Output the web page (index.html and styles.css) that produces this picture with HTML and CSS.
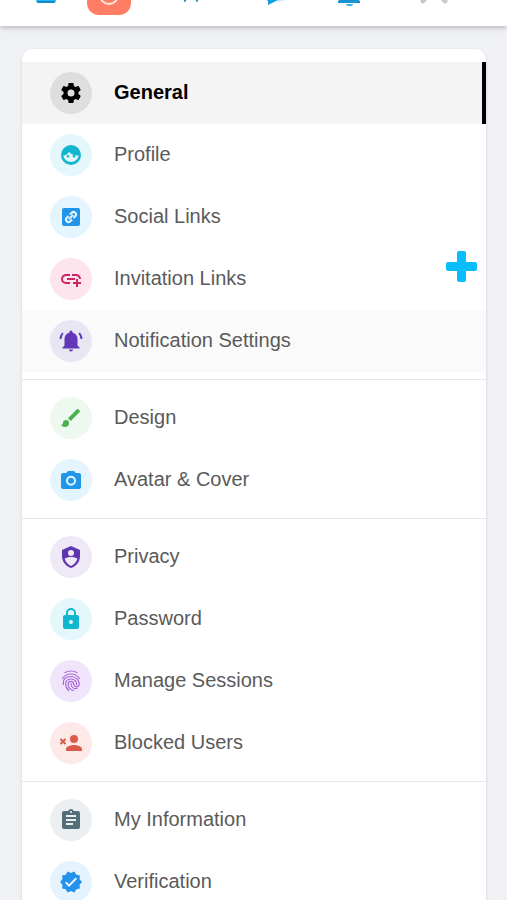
FILE: index.html
```html
<!DOCTYPE html>
<html lang="en">
<head>
<meta charset="utf-8">
<meta name="viewport" content="width=device-width, initial-scale=1">
<title>General Settings</title>
<link rel="stylesheet" href="styles.css">
</head>
<body>
<header class="topbar">
  <a href="#" aria-label="Home"><svg width="22" height="22" viewBox="0 0 22 22"><rect x="1" width="20" height="19" rx="3" fill="#2ab4f2"/><path d="M3 18h16" stroke="#128acb" stroke-width="2" stroke-linecap="round"/></svg></a>
  <a href="#" class="tile" aria-label="Stories"><svg width="24" height="24" viewBox="0 0 24 24"><circle cx="12" cy="14" r="9" fill="none" stroke="#ffe9e2" stroke-width="2"/></svg></a>
  <a href="#" aria-label="Groups"><svg width="18" height="22" viewBox="0 0 18 22"><path d="M5 1L3 17M12 1l3 16" stroke="#2f94b5" stroke-width="2" stroke-linecap="round"/></svg></a>
  <a href="#" aria-label="Messages"><svg width="24" height="24" viewBox="0 0 24 24"><path d="M2 2h18v15l-7 2-8 4v-4l-3-2z" fill="#159fe0"/><path d="M15 12h8v6l-9 2z" fill="#d3e2fa"/></svg></a>
  <a href="#" aria-label="Notifications"><svg width="22" height="24" viewBox="0 0 22 24"><path d="M4 16V9a7 7 0 0 1 14 0v7l4 3v2H0v-2z" fill="#1694cf"/><path d="M8 22h7a3.500 2 0 0 1-7 0z" fill="#38b4ec"/></svg></a>
  <a href="#" aria-label="Account"><svg width="30" height="22" viewBox="0 0 30 22"><path d="M9 11L4 17M21 11l5 6" stroke="#cbc9d4" stroke-width="5" stroke-linecap="round"/></svg></a>
</header>
<main class="page">
  <nav class="card" aria-label="Settings">
    <ul class="group">
      <li><a href="#" class="item active" aria-current="page"><span class="badge gray"><svg viewBox="0 0 24 24"><path d="M12,15.500A3.500,3.500 0 0,1 8.500,12A3.500,3.500 0 0,1 12,8.500A3.500,3.500 0 0,1 15.500,12A3.500,3.500 0 0,1 12,15.500M19.430,12.970C19.470,12.650 19.500,12.330 19.500,12C19.500,11.670 19.470,11.340 19.430,11L21.540,9.370C21.730,9.220 21.780,8.950 21.660,8.730L19.660,5.270C19.540,5.050 19.270,4.960 19.050,5.050L16.560,6.050C16.040,5.660 15.500,5.320 14.870,5.070L14.500,2.420C14.460,2.180 14.250,2 14,2H10C9.750,2 9.540,2.180 9.500,2.420L9.130,5.070C8.500,5.320 7.960,5.660 7.440,6.050L4.950,5.050C4.730,4.960 4.460,5.050 4.340,5.270L2.340,8.730C2.210,8.950 2.270,9.220 2.460,9.370L4.570,11C4.530,11.340 4.500,11.670 4.500,12C4.500,12.330 4.530,12.650 4.570,12.970L2.460,14.630C2.270,14.780 2.210,15.050 2.340,15.270L4.340,18.730C4.460,18.950 4.730,19.030 4.950,18.950L7.440,17.940C7.960,18.340 8.500,18.680 9.130,18.930L9.500,21.580C9.540,21.820 9.750,22 10,22H14C14.250,22 14.460,21.820 14.500,21.580L14.870,18.930C15.500,18.670 16.040,18.340 16.560,17.940L19.050,18.950C19.270,19.030 19.540,18.950 19.660,18.730L21.660,15.270C21.780,15.050 21.730,14.780 21.540,14.630L19.430,12.970Z"/></svg></span><span class="label">General</span></a></li>
      <li><a href="#" class="item"><span class="badge cyan"><svg viewBox="0 0 24 24"><circle cx="12" cy="12" r="10"/><path class="cut" d="M4.200 12.500C7 12.500 9 11 10 8.800c1.800 2.500 4.600 3.700 8 3.700q1 0 1.800-.3A7.900 7.900 0 0 1 4.200 12.500z"/><circle cx="9" cy="13.200" r="1.300"/><circle cx="15" cy="13.200" r="1.300"/></svg></span><span class="label">Profile</span></a></li>
      <li><a href="#" class="item"><span class="badge sky"><svg viewBox="0 0 24 24"><rect x="3" y="3" width="18" height="18" rx="2"/><g class="line cutline" transform="rotate(-45 12 12)"><path d="M11 9.500H8.500a2.500 2.500 0 0 0 0 5H11M13 9.500h2.500a2.500 2.500 0 0 1 0 5H13M9 12h6"/></g></svg></span><span class="label">Social Links</span></a></li>
      <li><a href="#" class="item"><span class="badge pink"><svg viewBox="0 0 24 24"><path d="M8,11H16V13H8V11M20.100,12H22C22,9.240 19.760,7 17,7H13V8.900H17C18.710,8.900 20.100,10.290 20.100,12M3.900,12C3.900,10.290 5.290,8.900 7,8.900H11V7H7A5,5 0 0,0 2,12A5,5 0 0,0 7,17H11V15.100H7C5.290,15.100 3.900,13.710 3.900,12M19,12H17V15H14V17H17V20H19V17H22V15H19V12Z"/></svg></span><span class="label">Invitation Links</span></a></li>
      <li><a href="#" class="item hovered"><span class="badge indigo"><svg viewBox="0 0 24 24"><path d="M12 1.500a1.600 1.600 0 0 0-1.600 1.600v.6A6.500 6.500 0 0 0 5.500 10v6.500L3.500 18.500v1h17v-1l-2-2V10a6.500 6.500 0 0 0-4.900-6.300v-.6A1.600 1.600 0 0 0 12 1.500zM10 20.500a2 2 0 0 0 4 0z"/><path class="line" d="M3.800 4Q1.800 6.500 1.500 10M20.200 4q2 2.500 2.300 6"/></svg></span><span class="label">Notification Settings</span></a></li>
    </ul>
    <ul class="group">
      <li><a href="#" class="item"><span class="badge green"><svg viewBox="0 0 24 24"><path d="M20.710,4.630L19.370,3.290C19,2.900 18.350,2.900 17.960,3.290L9,12.250L11.750,15L20.710,6.040C21.100,5.650 21.100,5 20.710,4.630M7,14A3,3 0 0,0 4,17C4,18.310 2.840,19 2,19C2.920,20.220 4.500,21 6,21A4,4 0 0,0 10,17A3,3 0 0,0 7,14Z"/></svg></span><span class="label">Design</span></a></li>
      <li><a href="#" class="item"><span class="badge sky"><svg viewBox="0 0 24 24"><path d="M9 3L7.200 5H4a2 2 0 0 0-2 2v12a2 2 0 0 0 2 2h16a2 2 0 0 0 2-2V7a2 2 0 0 0-2-2h-3.200L15 3z"/><circle class="line cutline" cx="12" cy="12.800" r="4"/></svg></span><span class="label">Avatar &amp; Cover</span></a></li>
    </ul>
    <ul class="group">
      <li><a href="#" class="item"><span class="badge violet"><svg viewBox="0 0 24 24"><path d="M12 1L3 5v6c0 5.550 3.840 10.740 9 12 5.160-1.260 9-6.450 9-12V5z"/><circle class="cut" cx="12" cy="8" r="3"/><path class="cut" d="M5.600 13.600C7 12.500 10 12 12 12s5 .5 6.400 1.600C17.500 17 15 20 12 21c-3-1-5.500-4-6.400-7.400z"/></svg></span><span class="label">Privacy</span></a></li>
      <li><a href="#" class="item"><span class="badge cyan"><svg viewBox="0 0 24 24"><path d="M12,17A2,2 0 0,0 14,15C14,13.890 13.100,13 12,13A2,2 0 0,0 10,15A2,2 0 0,0 12,17M18,8A2,2 0 0,1 20,10V20A2,2 0 0,1 18,22H6A2,2 0 0,1 4,20V10C4,8.890 4.900,8 6,8H7V6A5,5 0 0,1 12,1A5,5 0 0,1 17,6V8H18M12,3A3,3 0 0,0 9,6V8H15V6A3,3 0 0,0 12,3Z"/></svg></span><span class="label">Password</span></a></li>
      <li><a href="#" class="item"><span class="badge purple"><svg viewBox="0 0 24 24"><path class="thin" d="M6 3.500q6-3 12 0M3.500 9.500q3-4.500 8.500-4.500t8.500 4.500M4.500 15.500C3.500 10 7 7.500 12 7.500s9 4 8 8.500c-.7 2.600-4.800 2.300-5.200-.3-.4-4.400-5.300-4.200-5.600-.5-.2 3 2 5.300 5.300 6.300M9.500 21.500C5 17 5.800 10 12 10c4 0 5.800 3 5.600 5.800M12 14.500c0 3.800 2.400 5.500 6 5"/></svg></span><span class="label">Manage Sessions</span></a></li>
      <li><a href="#" class="item"><span class="badge red"><svg viewBox="0 0 24 24"><circle cx="15" cy="8" r="4"/><path d="M7 20v-2c0-2.700 5.300-4 8-4s8 1.300 8 4v2z"/><path class="line" d="M1.500 8l5 5M6.500 8l-5 5"/></svg></span><span class="label">Blocked Users</span></a></li>
    </ul>
    <ul class="group">
      <li><a href="#" class="item"><span class="badge slate"><svg viewBox="0 0 24 24"><path d="M19 3h-4.200a3 3 0 0 0-5.600 0H5a2 2 0 0 0-2 2v14a2 2 0 0 0 2 2h14a2 2 0 0 0 2-2V5a2 2 0 0 0-2-2z"/><circle class="cut" cx="12" cy="4" r="1"/><path class="cut" d="M7 7h10v2H7zM7 11h10v2H7zM7 15h7v2H7z"/></svg></span><span class="label">My Information</span></a></li>
      <li><a href="#" class="item"><span class="badge blue"><svg viewBox="0 0 24 24"><path d="M23,12L20.560,9.220L20.900,5.540L17.290,4.720L15.400,1.540L12,3L8.600,1.540L6.710,4.720L3.100,5.530L3.440,9.210L1,12L3.440,14.780L3.100,18.470L6.710,19.290L8.600,22.470L12,21L15.400,22.460L17.290,19.280L20.900,18.460L20.560,14.780L23,12M10,17L6,13L7.410,11.590L10,14.170L16.590,7.580L18,9L10,17Z"/></svg></span><span class="label">Verification</span></a></li>
    </ul>
    <button class="add" type="button" aria-label="Add"><svg width="32" height="32" viewBox="0 0 32 32" fill="#08bdfb"><rect x="1" y="11" width="31" height="9" rx="2"/><rect x="12" width="9" height="31" rx="2"/></svg></button>
  </nav>
</main>
</body>
</html>
```
FILE: styles.css
```css
* { box-sizing: border-box; }

body {
  height: 100vh;
  margin: 0;
  overflow: hidden;
  background: #eff1f5;
  font-family: "Liberation Sans", Arial, sans-serif;
  font-size: 20px;
  line-height: 24px;
  color: #5a5a5a;
}

/* Bar tucked under the top edge of the window */
.topbar {
  display: grid;
  grid-template-rows: 100%;
  grid-template-columns: 64fr 62fr 102fr 66fr 82fr 88fr;
  justify-items: center;
  align-items: end;
  height: 26px;
  padding: 0 29px 20px 14px;
  background: #fff;
  box-shadow: 0 1px 6px rgba(0, 0, 0, .3);
}

.topbar a { display: grid; place-items: center; }

.topbar svg { display: block; }

.topbar .tile {
  width: 44px;
  height: 44px;
  margin-bottom: -9px;
  border-radius: 12px;
  background: #ff7d63;
}

.page { padding: 23px 21px 20px 22px; }

.card {
  position: relative;
  padding: 13px 0;
  border-radius: 10px;
  background: #fff;
  box-shadow: 0 1px 3px rgba(0, 0, 0, .14);
}

.group { margin: 0; padding: 0; list-style: none; }

.group + .group {
  margin-top: 7px;
  padding-top: 7px;
  border-top: 1px solid #e6e8ec;
}

.item {
  display: flex;
  align-items: center;
  gap: 22px;
  height: 62px;
  padding: 0 28px;
  color: inherit;
  text-decoration: none;
}

.item.active {
  border-right: 4px solid #000;
  background: #f4f4f4;
  color: #000;
  font-weight: 700;
}

.item.hovered { background: #fafafa; }

.label { padding-bottom: 3px; }

.badge {
  display: grid;
  flex: none;
  place-items: center;
  width: 42px;
  height: 42px;
  border-radius: 50%;
  background: var(--tint);
}

.badge svg { width: 24px; height: 24px; fill: var(--ink); }
.badge .cut { fill: var(--tint); }
.badge .line { fill: none; stroke: var(--ink); stroke-width: 2; }
.badge .cutline { stroke: var(--tint); }
.badge .thin { fill: none; stroke: var(--ink); stroke-width: 1.2; stroke-linecap: round; }

.gray { --tint: #dedede; --ink: #000; }
.cyan { --tint: #e4f8fb; --ink: #10b5ce; }
.sky { --tint: #e5f5fe; --ink: #2196e8; }
.pink { --tint: #fde4ed; --ink: #cf2463; }
.indigo { --tint: #e9e6f3; --ink: #6237b8; }
.green { --tint: #edf8ef; --ink: #4caf50; }
.violet { --tint: #eee8f7; --ink: #5e35b1; }
.purple { --tint: #f1e5fc; --ink: #a566d8; }
.red { --tint: #fdeae8; --ink: #d95b48; }
.slate { --tint: #eceff1; --ink: #546e7a; }
.blue { --tint: #e4f3fe; --ink: #2491eb; }

.add {
  position: absolute;
  top: 202px;
  right: 9px;
  width: 32px;
  height: 32px;
  padding: 0;
  border: 0;
  background: none;
}

.add svg { display: block; }
```
